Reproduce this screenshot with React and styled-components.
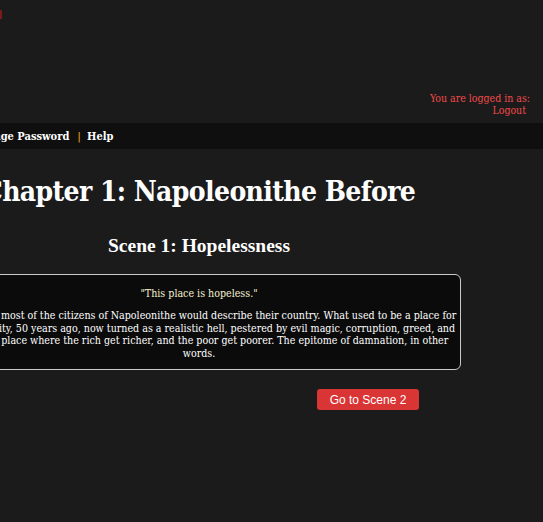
import styled, { createGlobalStyle } from "styled-components";

const GlobalStyle = createGlobalStyle`
    html, body {
        margin: 0;
        padding: 0;
        background: #1b1b1b;
        overflow: hidden;
    }
    body {
        font-family: "DejaVu Serif", serif;
        color: #ffffff;
    }
`;

const Page = styled.div`
    width: 543px;
    min-height: 522px;
    background: #1b1b1b;
`;

const Header = styled.header`
    position: relative;
    height: 123px;
    display: flex;
    flex-direction: column;
    justify-content: flex-end;
    align-items: flex-end;
    padding: 0 13px 7px 0;
    box-sizing: border-box;
`;

const LogoMark = styled.div`
    position: absolute;
    left: 0;
    top: 10px;
    width: 2px;
    height: 9px;
    background: #7a1a1a;
`;

const UserLine = styled.span`
    font-family: "DejaVu Serif Condensed", "DejaVu Serif", serif;
    font-size: 10.5px;
    line-height: 12px;
    color: #f24a4a;
    padding-right: ${p => p.$pad || 0}px;
`;

const NavBar = styled.nav`
    height: 26px;
    background: #0f0f0f;
    display: flex;
    align-items: center;
    margin-left: -28px;
    white-space: nowrap;
`;

const NavItem = styled.a`
    font-family: "DejaVu Serif Condensed", "DejaVu Serif", serif;
    font-weight: bold;
    font-size: 11px;
    color: #ffffff;
    text-decoration: none;
`;

const NavSep = styled.span`
    font-family: "DejaVu Sans", sans-serif;
    font-size: 11px;
    color: #f0a21e;
    margin: 0 6px 0 8px;
`;

const Main = styled.main`
    width: 524px;
    margin-left: -63px;
    display: flex;
    flex-direction: column;
    align-items: center;
`;

const ChapterTitle = styled.h1`
    margin: 26px 0 0;
    font-family: "DejaVu Serif Condensed", "DejaVu Serif", serif;
    font-weight: bold;
    font-size: 28px;
    letter-spacing: -0.6px;
    line-height: 34px;
    white-space: nowrap;
`;

const SceneTitle = styled.h2`
    margin: 26px 0 0;
    font-family: "Liberation Serif", serif;
    font-weight: bold;
    font-size: 19.5px;
    line-height: 22px;
`;

const StoryBox = styled.section`
    box-sizing: border-box;
    width: 524px;
    margin-top: 17px;
    padding: 11px 4px 10px;
    background: #0b0b0b;
    border: 1px solid #c9c9c9;
    border-radius: 6px;
    text-align: center;
    font-family: "DejaVu Serif Condensed", "DejaVu Serif", serif;
    font-size: 10.6px;
`;

const Quote = styled.p`
    margin: 0 0 9px;
    color: #f7f1cf;
    line-height: 14px;
`;

const Story = styled.p`
    margin: 0;
    line-height: 12.5px;
    color: #ffffff;
`;

const StoryLine = styled.span`
    display: block;
    white-space: nowrap;
`;

const ButtonRow = styled.div`
    align-self: stretch;
    display: flex;
    justify-content: flex-end;
    padding-right: 42px;
    margin-top: 19px;
`;

const NextButton = styled.button`
    width: 102px;
    height: 21px;
    border: none;
    border-radius: 3px;
    background: #d93535;
    color: #ffffff;
    font-family: "Liberation Sans", Arial, sans-serif;
    font-size: 12px;
    cursor: pointer;
`;

const storyLines = [
    "That is how most of the citizens of Napoleonithe would describe their country. What used to be a place for",
    "love and unity, 50 years ago, now turned as a realistic hell, pestered by evil magic, corruption, greed, and",
    "poverty; a place where the rich get richer, and the poor get poorer. The epitome of damnation, in other",
    "words.",
];

export default function App() {
    return (
        <Page>
            <GlobalStyle/>
            <Header>
                <LogoMark/>
                <UserLine>You are logged in as:</UserLine>
                <UserLine $pad={4}>Logout</UserLine>
            </Header>

            <NavBar>
                <NavItem href="#">Change Password</NavItem>
                <NavSep>|</NavSep>
                <NavItem href="#">Help</NavItem>
            </NavBar>

            <Main>
                <ChapterTitle>Chapter 1: Napoleonithe Before</ChapterTitle>
                <SceneTitle>Scene 1: Hopelessness</SceneTitle>

                <StoryBox>
                    <Quote>"This place is hopeless."</Quote>
                    <Story>
                        {storyLines.map(line => <StoryLine key={line}>{line}</StoryLine>)}
                    </Story>
                </StoryBox>

                <ButtonRow>
                    <NextButton>Go to Scene 2</NextButton>
                </ButtonRow>
            </Main>
        </Page>
    );
}
